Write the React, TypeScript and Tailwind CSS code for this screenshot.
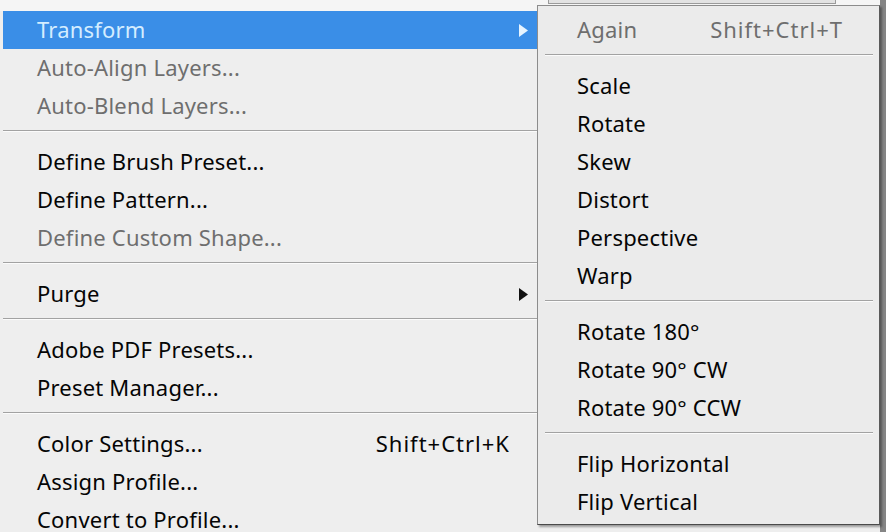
const font = { fontFamily: '"Noto Sans", "Open Sans", sans-serif' }

type Entry =
  | { kind: 'item'; label: string; disabled?: boolean; shortcut?: string; arrow?: boolean; active?: boolean }
  | { kind: 'sep' }

const mainMenu: Entry[] = [
  { kind: 'item', label: 'Transform', arrow: true, active: true },
  { kind: 'item', label: 'Auto-Align Layers...', disabled: true },
  { kind: 'item', label: 'Auto-Blend Layers...', disabled: true },
  { kind: 'sep' },
  { kind: 'item', label: 'Define Brush Preset...' },
  { kind: 'item', label: 'Define Pattern...' },
  { kind: 'item', label: 'Define Custom Shape...', disabled: true },
  { kind: 'sep' },
  { kind: 'item', label: 'Purge', arrow: true },
  { kind: 'sep' },
  { kind: 'item', label: 'Adobe PDF Presets...' },
  { kind: 'item', label: 'Preset Manager...' },
  { kind: 'sep' },
  { kind: 'item', label: 'Color Settings...', shortcut: 'Shift+Ctrl+K' },
  { kind: 'item', label: 'Assign Profile...' },
  { kind: 'item', label: 'Convert to Profile...' },
]

const subMenu: Entry[] = [
  { kind: 'item', label: 'Again', disabled: true, shortcut: 'Shift+Ctrl+T' },
  { kind: 'sep' },
  { kind: 'item', label: 'Scale' },
  { kind: 'item', label: 'Rotate' },
  { kind: 'item', label: 'Skew' },
  { kind: 'item', label: 'Distort' },
  { kind: 'item', label: 'Perspective' },
  { kind: 'item', label: 'Warp' },
  { kind: 'sep' },
  { kind: 'item', label: 'Rotate 180°' },
  { kind: 'item', label: 'Rotate 90° CW' },
  { kind: 'item', label: 'Rotate 90° CCW' },
  { kind: 'sep' },
  { kind: 'item', label: 'Flip Horizontal' },
  { kind: 'item', label: 'Flip Vertical' },
]

function Arrow({ color }: { color: string }) {
  return (
    <svg width="9" height="13" viewBox="0 0 9 13" className="shrink-0">
      <path d="M0 0 L9 6.5 L0 13 Z" fill={color} />
    </svg>
  )
}

function Separator({ inset }: { inset: string }) {
  return (
    <div className={`h-[18px] shrink-0 pt-[5px] ${inset}`}>
      <div className="border-t border-[#a2a2a2] border-b border-b-[#fbfbfb]" />
    </div>
  )
}

function MainMenu() {
  return (
    <div className="flex w-[540px] flex-col">
      {mainMenu.map((e, i) =>
        e.kind === 'sep' ? (
          <Separator key={i} inset="pl-[3px]" />
        ) : (
          <div
            key={i}
            className={`ml-[3px] flex h-[38px] shrink-0 items-center pl-[34px] pr-[12px] text-[22px] tracking-[0.2px] ${
              e.active ? 'bg-[#3a8ee7] text-[#d4edff]' : e.disabled ? 'text-[#6e6e6e]' : 'text-[#050505]'
            }`}
          >
            <span className="flex-1 pb-[2px]">{e.label}</span>
            {e.shortcut && <span className="mr-[18px] pb-[2px] tracking-[1px]">{e.shortcut}</span>}
            {e.arrow && <Arrow color={e.active ? '#e6f4ff' : '#111111'} />}
          </div>
        )
      )}
    </div>
  )
}

function SubMenu() {
  return (
    <div className="absolute left-[537px] top-[5px] w-[343px] border border-[#8c8c8c] border-r-[#5a5a5a] border-b-[#4a4a4a] bg-[#ebebeb] pt-[5px] pb-[3px] shadow-[2px_2px_2px_rgba(0,0,0,0.35)]">
      {subMenu.map((e, i) =>
        e.kind === 'sep' ? (
          <Separator key={i} inset="pl-[7px] pr-[6px]" />
        ) : (
          <div
            key={i}
            className={`flex h-[38px] items-center pl-[39px] pr-[36px] text-[22px] tracking-[0.2px] ${
              e.disabled ? 'text-[#6e6e6e]' : 'text-[#050505]'
            }`}
          >
            <span className="flex-1 pb-[2px]">{e.label}</span>
            {e.shortcut && <span className="pb-[2px] tracking-[1px]">{e.shortcut}</span>}
          </div>
        )
      )}
    </div>
  )
}

export default function App() {
  return (
    <div className="relative flex h-[532px] w-[886px] overflow-hidden bg-[#eeeeee]" style={font}>
      <div className="flex w-[880px] flex-col">
        <div className="flex h-[11px] shrink-0 bg-[#f5f5f5]">
          <div className="ml-[548px] h-[4px] w-[288px] border-x border-b border-[#9a9a9a] bg-[#e2e2e2]" />
        </div>
        <MainMenu />
      </div>
      <div className="w-[6px] bg-[#858585]" />
      <SubMenu />
    </div>
  )
}
